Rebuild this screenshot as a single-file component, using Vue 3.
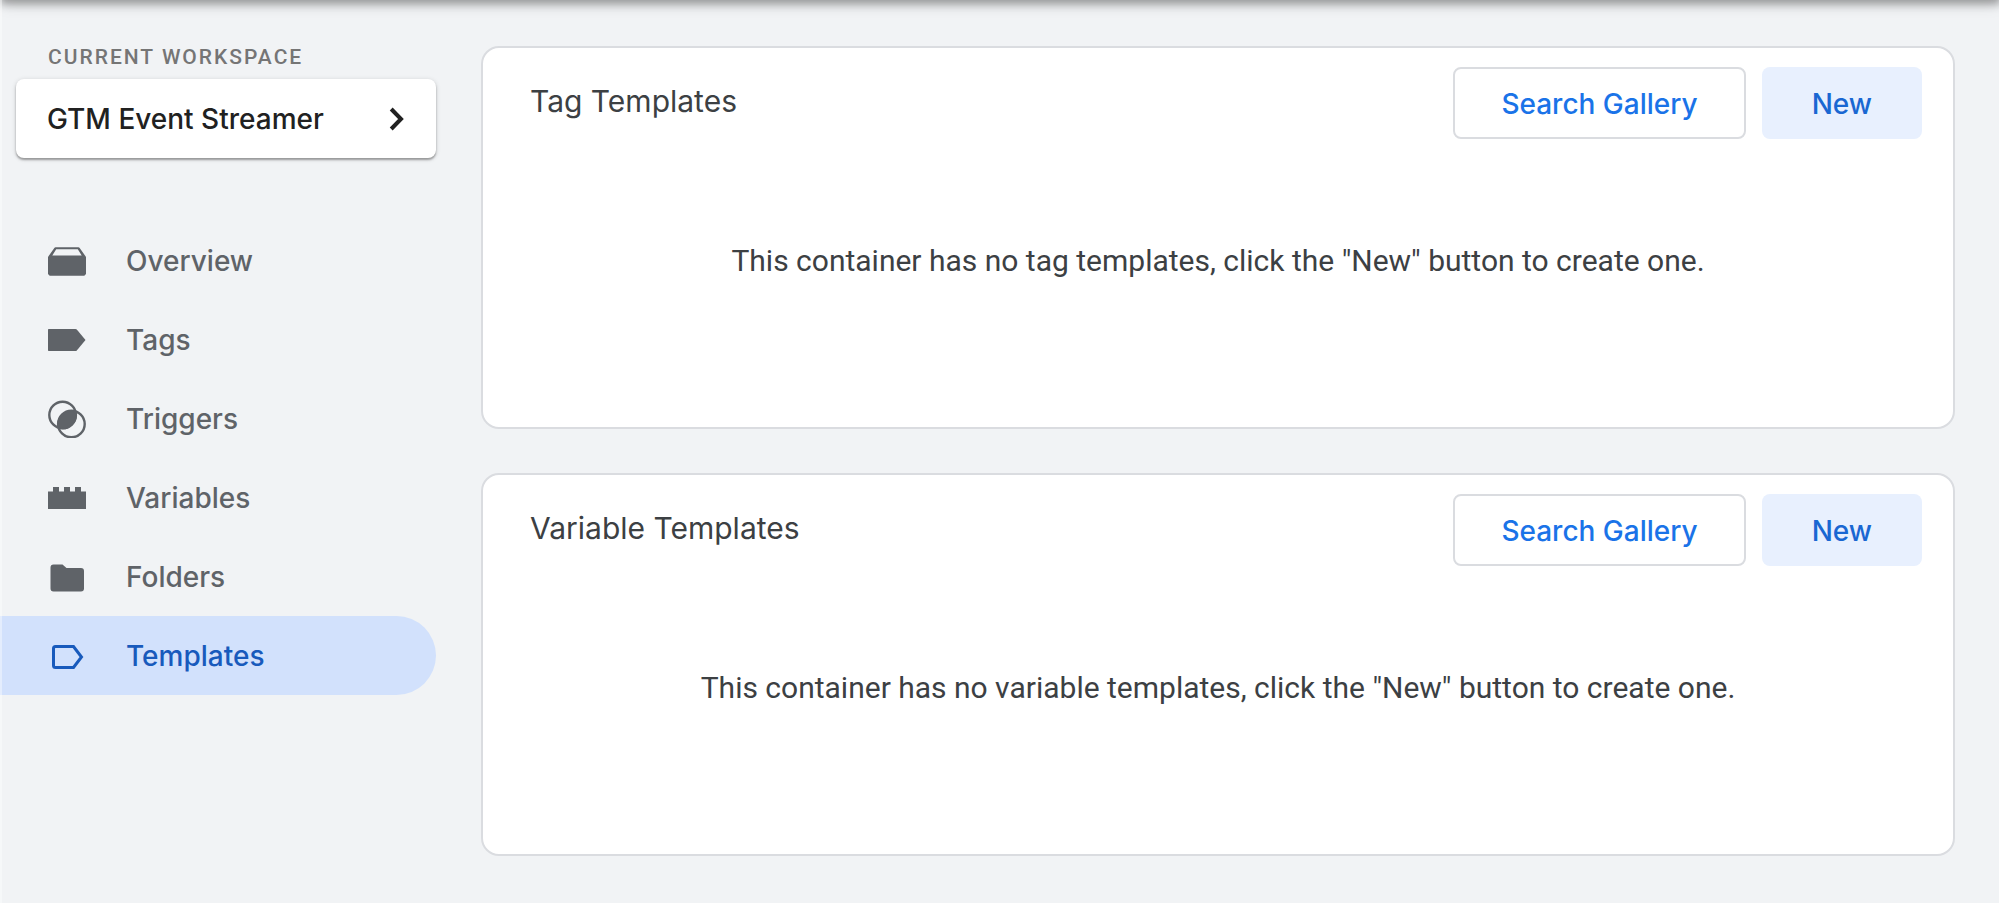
<script setup>
import { ref } from 'vue'

const navItems = ['Overview', 'Tags', 'Triggers', 'Variables', 'Folders', 'Templates']
const current = ref('Templates')

const sections = [
  {
    id: 'tag-templates',
    title: 'Tag Templates',
    empty: 'This container has no tag templates, click the "New" button to create one.',
  },
  {
    id: 'variable-templates',
    title: 'Variable Templates',
    empty: 'This container has no variable templates, click the "New" button to create one.',
  },
]
</script>

<template>
  <div class="page">
    <div class="topbar"></div>
    <aside class="sidebar">
      <div id="workspace-label" class="workspace-label">Current Workspace</div>
      <button class="workspace" type="button" aria-describedby="workspace-label">
        <span>GTM Event Streamer</span>
        <svg class="chevron" viewBox="0 0 16 24" aria-hidden="true">
          <path d="M2.2 2 12 12 2.2 22" />
        </svg>
      </button>
      <nav class="nav">
        <a
          v-for="item in navItems"
          :key="item"
          href="#"
          class="nav-item"
          :class="{ active: item === current }"
          @click.prevent="current = item"
        >
          <svg class="icon" viewBox="0 0 38 38" aria-hidden="true">
            <path
              v-if="item === 'Overview'"
              fill-rule="evenodd"
              d="M7.500 5.300h23l1 .5 5.500 7.700 1 1.500V32l-1.700 1.700H1.700L0 32V15l1-1.500L6.500 5.800zM8.200 7.200 4.300 13.500h29.400L29.800 7.200z"
            />
            <path
              v-else-if="item === 'Tags'"
              d="M0 8.700Q0 8 .7 8H27.500Q28.200 8 28.800 8.600L37.500 19 28.800 29.400Q28.200 30 27.500 30H.7Q0 30 0 29.300z"
            />
            <template v-else-if="item === 'Triggers'">
              <circle class="line" cx="14.600" cy="15" r="13.300" />
              <circle class="line" cx="23.400" cy="24" r="13.300" />
              <path class="lens" d="M27.600 11.800A13.300 13.300 0 0 1 10.600 27.800 13.300 13.300 0 0 1 27.600 11.800z" />
            </template>
            <path
              v-else-if="item === 'Variables'"
              d="M0 12.500H5V8H11V12.500H16V8H22V12.500H27V8H33V12.500H38V30H0z"
            />
            <path
              v-else-if="item === 'Folders'"
              d="M5.500 6.500H14.500l4 3.500H33Q36 10 36 13V30.500Q36 33.500 33 33.500H5.500Q2.500 33.500 2.500 30.500V9.500Q2.500 6.500 5.500 6.500z"
            />
            <path
              v-else
              class="line tag-line"
              d="M7.500 9.500H25.500L33.500 20 25.500 30.500H7.500Q5.500 30.500 5.500 28.500V11.500Q5.500 9.500 7.500 9.500z"
            />
          </svg>
          <span>{{ item }}</span>
        </a>
      </nav>
    </aside>
    <main class="content">
      <section v-for="s in sections" :key="s.id" class="card" :aria-labelledby="s.id">
        <header class="card-head">
          <h2 :id="s.id">{{ s.title }}</h2>
          <div class="actions">
            <button class="btn outlined" type="button">Search Gallery</button>
            <button class="btn tonal" type="button">New</button>
          </div>
        </header>
        <p class="empty">{{ s.empty }}</p>
      </section>
    </main>
  </div>
</template>

<style>
body {
  background: #f1f3f5;
}
</style>

<style scoped>
.page {
  position: relative;
  display: flex;
  gap: 45px;
  min-height: 100vh;
  box-sizing: border-box;
  padding: 46px 44px 45px 0;
  overflow: hidden;
  background: #f1f3f5;
  color: #3c4043;
  font-family: Roboto, "Liberation Sans", sans-serif;
}
.page::after {
  content: '';
  position: absolute;
  inset: 0 auto 0 0;
  width: 2px;
  background: rgba(255, 255, 255, 0.4);
}
.topbar {
  position: absolute;
  inset: -20px 0 auto 2px;
  height: 20px;
  box-shadow: 0 2px 8px 2px rgba(0, 0, 0, 0.3), 0 4px 16px rgba(0, 0, 0, 0.14);
}
.sidebar {
  flex: none;
  width: 436px;
}
.workspace-label {
  padding-left: 48px;
  font-size: 21px;
  line-height: 22px;
  font-weight: 500;
  letter-spacing: 2px;
  text-transform: uppercase;
  color: #757575;
}
.workspace {
  display: flex;
  align-items: center;
  justify-content: space-between;
  width: calc(100% - 16px);
  height: 79px;
  margin: 11px 0 0 16px;
  padding: 0 31px;
  border: 0;
  border-radius: 8px;
  background: #fff;
  box-shadow: 0 2px 2px rgba(0, 0, 0, 0.3), 0 1px 5px rgba(0, 0, 0, 0.16);
  color: #212121;
  font-family: Inter, sans-serif;
  font-size: 28px;
  font-weight: 500;
}
.chevron {
  width: 16px;
  height: 24px;
}
.chevron path {
  fill: none;
  stroke: currentColor;
  stroke-width: 4;
}
.nav {
  margin-top: 63px;
}
.nav-item {
  display: flex;
  align-items: center;
  gap: 40px;
  height: 79px;
  padding-left: 48px;
  border-radius: 0 40px 40px 0;
  color: #5f6368;
  font-family: Inter, sans-serif;
  font-size: 28px;
  font-weight: 500;
  text-decoration: none;
}
.nav-item.active {
  background: #d2e1fc;
  color: #185abc;
}
.icon {
  flex: none;
  width: 38px;
  height: 38px;
  fill: currentColor;
}
.line {
  fill: none;
  stroke: currentColor;
  stroke-width: 2.4;
}
.lens {
  stroke: currentColor;
  stroke-width: 1.6;
}
.tag-line {
  stroke-width: 3;
}
.content {
  flex: 1;
  min-width: 0;
  display: flex;
  flex-direction: column;
  gap: 44px;
}
.card {
  box-sizing: border-box;
  border: 2px solid #dadce0;
  border-radius: 18px;
  background: #fff;
}
.card-head {
  display: flex;
  justify-content: space-between;
  padding: 19px 31px 0 47px;
}
h2 {
  margin: 14px 0 0;
  font-family: Inter, sans-serif;
  font-size: 30px;
  line-height: 40px;
  font-weight: 400;
}
.actions {
  display: flex;
  gap: 16px;
}
.btn {
  height: 72px;
  padding: 2px 46px 0;
  border: 2px solid transparent;
  border-radius: 8px;
  font-family: Inter, sans-serif;
  font-size: 28px;
  font-weight: 500;
}
.outlined {
  border-color: #dadce0;
  background: #fff;
  color: #1a73e8;
}
.tonal {
  padding: 2px 48px 0;
  background: #e8f0fe;
  color: #1967d2;
}
.empty {
  margin: 0;
  padding: 103px 48px 147px;
  font-size: 30px;
  line-height: 38px;
  text-align: center;
}
</style>
